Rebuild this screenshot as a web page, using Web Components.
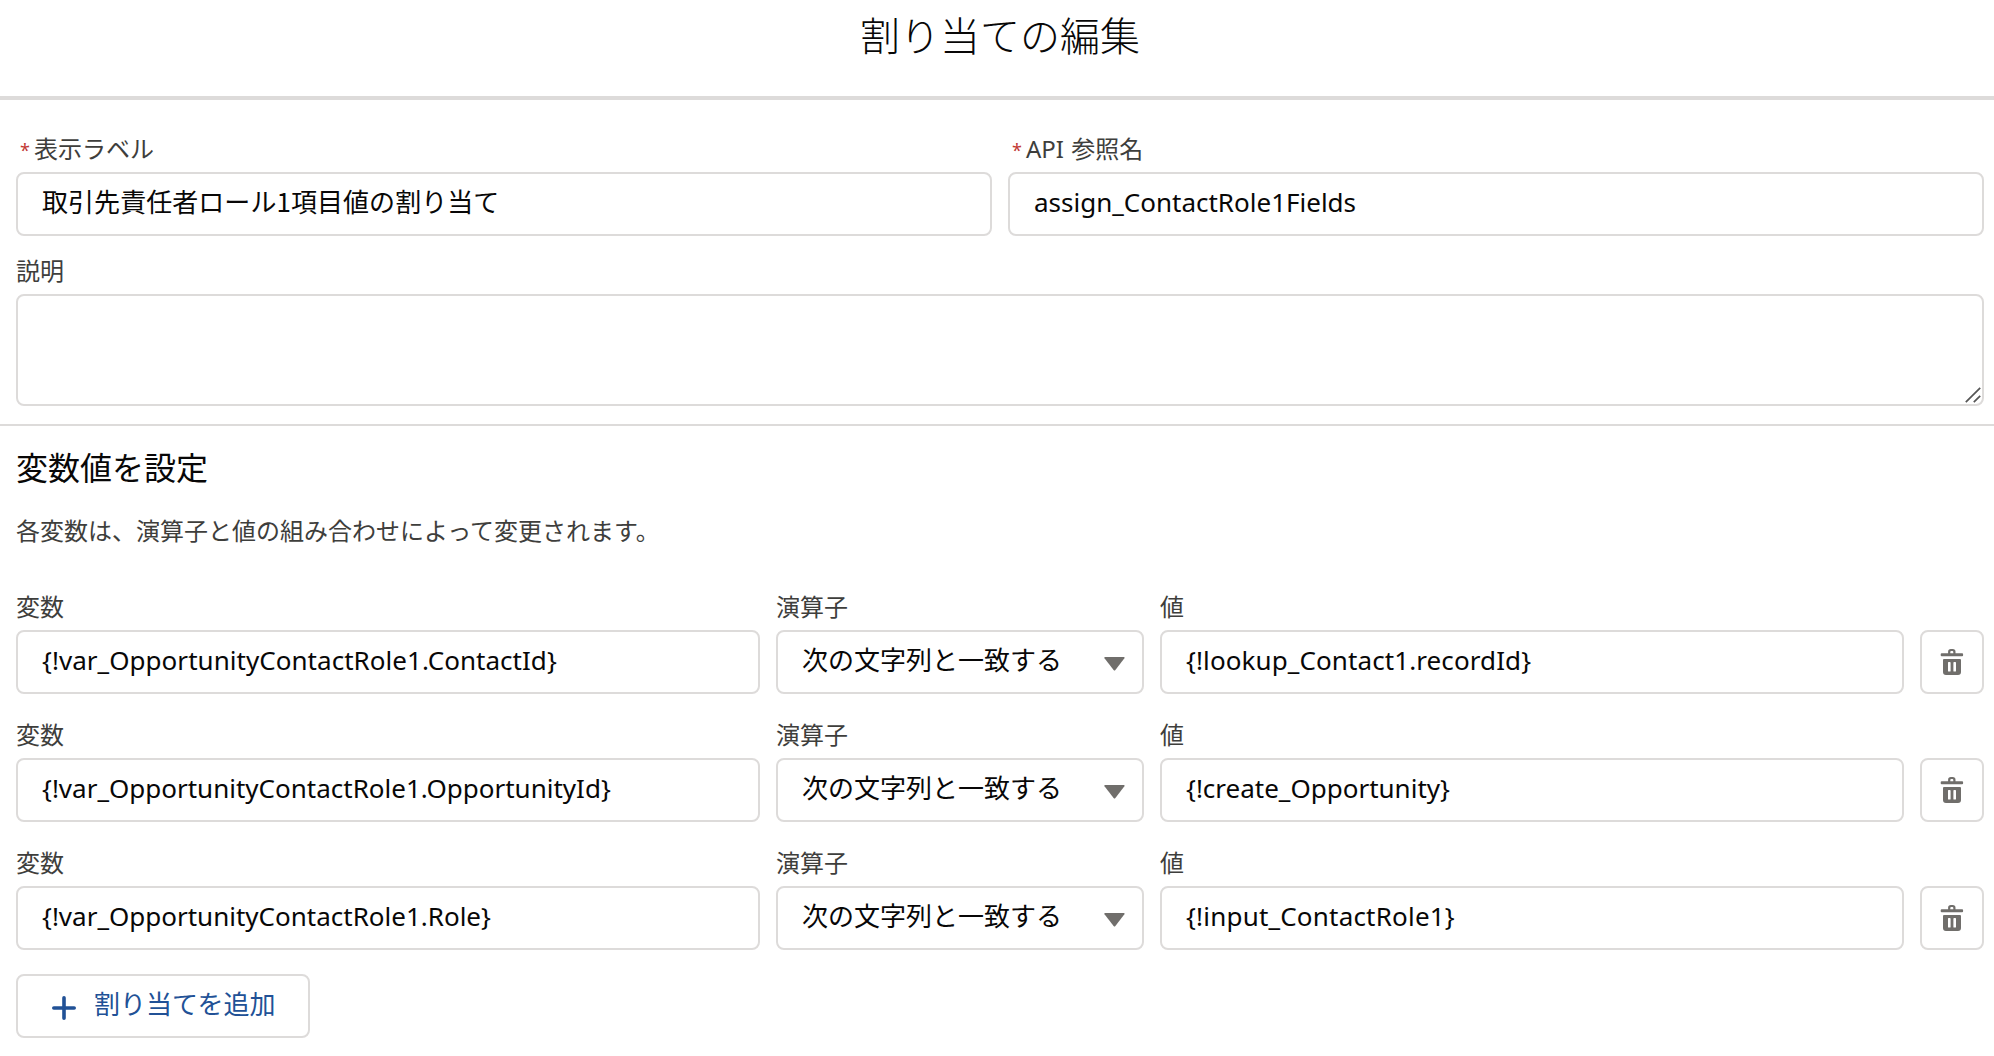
<!DOCTYPE html>
<html lang="ja">
<head>
<meta charset="utf-8">
<title>割り当ての編集</title>
<style>
body{margin:0;background:#fff;color:#080707;font-family:"Noto Sans","Noto Sans CJK JP",sans-serif;font-size:26px}
</style>
</head>
<body>
<assignment-editor></assignment-editor>
<script>
const define=(name,html,setup)=>customElements.define(name,class extends HTMLElement{
  connectedCallback(){
    if(this.shadowRoot)return;
    const t=document.createElement('template');
    t.innerHTML=html;
    this.attachShadow({mode:'open'}).append(t.content.cloneNode(true));
    if(setup)setup(this,this.shadowRoot);
  }
});

define('form-field',`
<style>
:host{display:flex;flex-direction:column;min-width:0}
.label{display:flex;height:34px;line-height:22px;font-size:24px;color:#3e3e3c;white-space:pre;word-spacing:1px}
.req{display:none;width:18px;box-sizing:border-box;padding-left:4px;font-size:18px;line-height:24px;color:#c23934}
:host([required]) .req{display:block}
</style>
<div class="label"><span class="req">*</span><slot name="label"></slot></div>
<slot></slot>`);

define('text-box',`
<style>
:host{display:flex;box-sizing:border-box;height:64px;border:2px solid #dddbda;border-radius:8px;padding:0 24px;background:#fff;line-height:56px;white-space:pre;letter-spacing:var(--track,0)}
</style><span><slot></slot></span>`);

define('text-area',`
<style>
:host{display:flex;justify-content:flex-end;align-items:flex-end;box-sizing:border-box;height:112px;border:2px solid #dddbda;border-radius:8px}
svg{display:block;margin:0 1px 1px 0}
</style>
<svg width="16" height="16" viewBox="0 0 16 16" fill="none" stroke="#555" stroke-width="1.7"><path d="M.8 15.2 15.2.8M8.8 15.2l6.4-6.4"/></svg>`);

define('select-box',`
<style>
:host{display:flex;justify-content:space-between;box-sizing:border-box;height:64px;border:2px solid #dddbda;border-radius:8px;padding:0 17px 0 24px;line-height:56px;white-space:pre}
svg{display:block;margin-top:25px}
</style><span><slot></slot></span>
<svg width="21" height="14" viewBox="0 0 21 14"><path fill="#706e6b" d="M1.2 0h18.6q1.4 0 .6 1.2L11.4 13q-.9 1-1.8 0L.5 1.2Q-.2 0 1.2 0z"/></svg>`);

define('delete-button',`
<style>
:host{display:block;align-self:flex-end}
button{display:flex;align-items:center;justify-content:center;box-sizing:border-box;width:64px;height:64px;margin:0;padding:0;border:2px solid #dddbda;border-radius:8px;background:#fff}
</style>
<button aria-label="削除"><svg width="24" height="28" viewBox="0 0 24 28"><path fill="#706e6b" fill-rule="evenodd" d="M1.7 5.3h6.4V3.8q0-2.8 2.8-2.8h1.8q2.8 0 2.8 2.8v1.5h6.6q1 0 1 1v1q0 1-1 1H1.7q-1 0-1-1v-1q0-1 1-1zM10.3 5.3h3V4q0-.9-.9-.9H11.2q-.9 0-.9.9zM4 11h16q1 0 1 1v12q0 3-3 3H6q-3 0-3-3V12q0-1 1-1zM8.6 14q-.6 0-.6.7v8.2q0 .7.7.7h1.2q.7 0 .7-.7v-8.2q0-.7-.7-.7zM14.1 14q-.7 0-.7.7v8.2q0 .7.7.7h1.2q.7 0 .7-.7v-8.2q0-.7-.7-.7z"/></svg></button>`);

define('add-button',`
<style>
:host{display:flex}
button{display:flex;box-sizing:border-box;min-width:294px;height:64px;margin:0;padding:0 32px 0 34px;gap:18px;border:2px solid #dddbda;border-radius:8px;background:#fff;color:#215196;font:inherit;line-height:56px;white-space:pre}
svg{display:block;margin-top:20px}
</style>
<button><svg width="24" height="24" viewBox="0 0 24 24" fill="none" stroke="#215196" stroke-width="3.6" stroke-linecap="round"><path d="M12 1.8v20.4M1.8 12h20.4"/></svg><span><slot></slot></span></button>`);

define('assignment-row',`
<style>
:host{display:grid;grid-template-columns:744px 368px 744px 64px;column-gap:16px;height:98px}
</style>
<form-field><span slot="label">変数</span><text-box id="v"></text-box></form-field>
<form-field><span slot="label">演算子</span><select-box>次の文字列と一致する</select-box></form-field>
<form-field><span slot="label">値</span><text-box id="x"></text-box></form-field>
<delete-button></delete-button>`,(host,root)=>{
  const v=root.getElementById('v'),x=root.getElementById('x');
  v.textContent=host.getAttribute('variable');
  x.textContent=host.getAttribute('value');
  v.style.setProperty('--track',host.getAttribute('vtrack')||'0');
  x.style.setProperty('--track',host.getAttribute('xtrack')||'0');
});

define('assignment-editor',`
<style>
:host{display:block;height:1056px;overflow:hidden}
header{box-sizing:border-box;height:100px;border-bottom:4px solid #dddbda;text-align:center;padding-left:6px}
h1{margin:0;font-size:40px;font-weight:300;line-height:69px;font-family:"Noto Sans CJK JP",sans-serif}
.props{box-sizing:border-box;height:326px;padding:38px 10px 0 16px;border-bottom:2px solid #dddbda}
.pair{display:grid;grid-template-columns:1fr 1fr;gap:16px}
.desc{margin-top:24px}
.values{padding:0 10px 0 16px}
h2{margin:0;padding-top:22px;font-size:32px;font-weight:400;line-height:40px}
p{margin:0;padding-top:25px;font-size:24px;line-height:36px;color:#3e3e3c}
.rows{display:flex;flex-direction:column;gap:30px;padding-top:47px;margin-bottom:24px}
</style>
<header><h1>割り当ての編集</h1></header>
<section class="props">
<div class="pair">
<form-field required><span slot="label">表示ラベル</span><text-box style="font-family:'Noto Sans CJK JP',sans-serif;line-height:54px;--track:.05px">取引先責任者ロール1項目値の割り当て</text-box></form-field>
<form-field required><span slot="label">API 参照名</span><text-box>assign_ContactRole1Fields</text-box></form-field>
</div>
<form-field class="desc"><span slot="label">説明</span><text-area></text-area></form-field>
</section>
<section class="values">
<h2>変数値を設定</h2>
<p>各変数は、演算子と値の組み合わせによって変更されます。</p>
<div class="rows">
<assignment-row variable="{!var_OpportunityContactRole1.ContactId}" value="{!lookup_Contact1.recordId}" vtrack=".04px" xtrack=".1px"></assignment-row>
<assignment-row variable="{!var_OpportunityContactRole1.OpportunityId}" value="{!create_Opportunity}"></assignment-row>
<assignment-row variable="{!var_OpportunityContactRole1.Role}" value="{!input_ContactRole1}" xtrack=".2px"></assignment-row>
</div>
<add-button>割り当てを追加</add-button>
</section>`);
</script>
</body>
</html>
